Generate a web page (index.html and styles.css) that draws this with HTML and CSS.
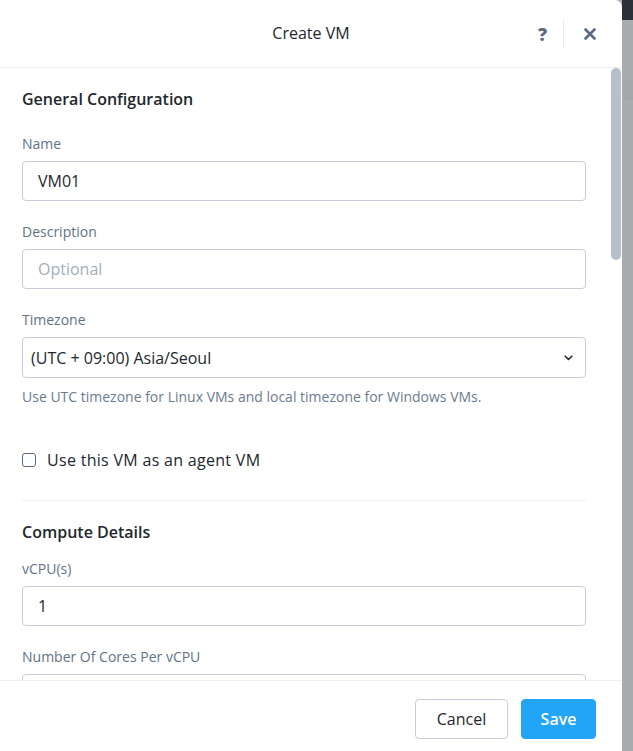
FILE: index.html
```html
<!DOCTYPE html>
<html>
<head>
<meta charset="utf-8">
<link rel="stylesheet" href="styles.css">
</head>
<body>
<div class="page">
  <div class="modal">
    <header class="modal-header">
      <div class="title">Create VM</div>
      <div class="header-actions">
        <span class="help">?</span>
        <span class="sep"></span>
        <svg class="close" width="12" height="12" viewBox="0 0 12 12"><path d="M1.5 1.5 L10.5 10.5 M10.5 1.5 L1.5 10.5" stroke="#5b6b7f" stroke-width="2.6" stroke-linecap="round"/></svg>
      </div>
    </header>
    <div class="modal-body">
      <div class="scroll-thumb"></div>
      <div class="content">
        <h2 class="section-title">General Configuration</h2>
        <div class="field">
          <label class="label">Name</label>
          <div class="input">VM01</div>
        </div>
        <div class="field">
          <label class="label">Description</label>
          <div class="input placeholder">Optional</div>
        </div>
        <div class="field">
          <label class="label">Timezone</label>
          <div class="input select">
            <span>(UTC + 09:00) Asia/Seoul</span>
            <svg width="9" height="6" viewBox="0 0 9 6"><path d="M1.2 1.2 L4.5 4.5 L7.8 1.2" fill="none" stroke="#22272e" stroke-width="1.6" stroke-linecap="round" stroke-linejoin="round"/></svg>
          </div>
          <div class="help-text">Use UTC timezone for Linux VMs and local timezone for Windows VMs.</div>
        </div>
        <div class="check-row">
          <span class="checkbox"></span>
          <span class="check-label">Use this VM as an agent VM</span>
        </div>
        <div class="divider"></div>
        <h2 class="section-title compact">Compute Details</h2>
        <div class="field">
          <label class="label">vCPU(s)</label>
          <div class="input">1</div>
        </div>
        <div class="field">
          <label class="label">Number Of Cores Per vCPU</label>
          <div class="input"></div>
        </div>
      </div>
    </div>
    <footer class="modal-footer">
      <button class="btn btn-cancel">Cancel</button>
      <button class="btn btn-save">Save</button>
    </footer>
  </div>
  <div class="backdrop">
    <div class="backdrop-top"></div>
    <div class="backdrop-band"></div>
  </div>
</div>
</body>
</html>
```

FILE: styles.css
```css
* { box-sizing: border-box; }
html, body {
  margin: 0;
  padding: 0;
  width: 633px;
  height: 751px;
  overflow: hidden;
  font-family: "Open Sans", Lato, sans-serif;
  color: #22272e;
}
.page {
  display: flex;
  width: 633px;
  height: 751px;
  background: #a9acaf;
}
.modal {
  width: 622px;
  height: 751px;
  background: #fff;
  border-top-right-radius: 7px;
  display: flex;
  flex-direction: column;
  position: relative;
  z-index: 1;
}
.backdrop {
  flex: 1;
  display: flex;
  flex-direction: column;
}
.backdrop-top {
  height: 20px;
  background: #2b313a;
}
.backdrop-band {
  margin-top: 60px;
  height: 20px;
  background: #a4a8aa;
}
.modal-header {
  height: 68px;
  border-bottom: 1px solid #eceef1;
  display: flex;
  align-items: center;
  justify-content: center;
  position: relative;
}
.title {
  font-size: 16px;
  color: #22272e;
  padding-bottom: 2px;
}
.header-actions {
  position: absolute;
  right: 26px;
  top: 20px;
  height: 28px;
  display: flex;
  align-items: center;
}
.help {
  font-weight: 800;
  font-size: 18px;
  color: #5b6b7f;
  margin-right: 16px;
}
.sep {
  width: 1px;
  height: 28px;
  background: #e8ebee;
  margin-right: 20px;
}
.close { display: block; }
.modal-body {
  flex: 1;
  overflow: hidden;
  position: relative;
}
.scroll-thumb {
  position: absolute;
  right: 1px;
  top: 0;
  width: 10px;
  height: 192px;
  border-radius: 5px;
  background: #b8bfcc;
}
.content {
  padding: 21px 36px 0 22px;
}
.section-title {
  margin: 0 0 26px;
  font-size: 16px;
  font-weight: 600;
  color: #22272e;
  line-height: 20px;
}
.section-title.compact {
  margin-bottom: 18px;
}
.field {
  margin-bottom: 22px;
}
.label {
  display: block;
  font-size: 14px;
  color: #627386;
  line-height: 18px;
  margin-bottom: 8px;
}
.input {
  height: 40px;
  border: 1px solid #c6cdd6;
  border-radius: 4px;
  padding: 0 15px;
  display: flex;
  align-items: center;
  font-size: 16px;
  color: #22272e;
}
.input.placeholder { color: #a2aebb; }
.input.select {
  height: 41px;
  padding: 0 12px 0 8px;
  justify-content: space-between;
}
.help-text {
  margin-top: 10px;
  font-size: 14px;
  color: #6b7c8f;
  line-height: 18px;
}
.check-row {
  display: flex;
  align-items: center;
  margin-top: 44px;
  height: 20px;
}
.checkbox {
  width: 14px;
  height: 14px;
  border: 1.5px solid #5b6b7f;
  border-radius: 3px;
  margin-right: 11px;
}
.check-label {
  font-size: 16px;
  letter-spacing: 0.3px;
  color: #22272e;
}
.divider {
  height: 1px;
  background: #eef0f2;
  margin: 30px 0 21px;
}
.modal-footer {
  height: 71px;
  border-top: 1px solid #eceef1;
  display: flex;
  justify-content: flex-end;
  align-items: center;
  padding: 6px 26px 0 0;
  gap: 13px;
  background: #fff;
}
.btn {
  height: 40px;
  border-radius: 4px;
  font-family: "Open Sans", Lato, sans-serif;
  font-size: 16px;
  padding: 0;
}
.btn-cancel {
  background: #fff;
  border: 1px solid #c6cdd6;
  color: #22272e;
  width: 93px;
}
.btn-save {
  background: #22a5f7;
  border: 1px solid #22a5f7;
  color: #fff;
  font-weight: 600;
  width: 75px;
}
```
